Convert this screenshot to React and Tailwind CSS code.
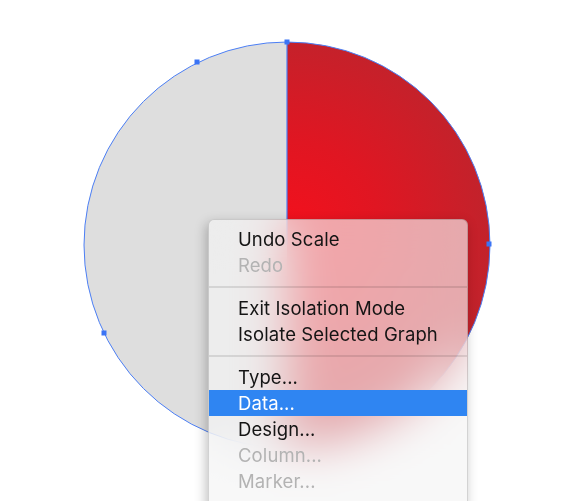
const items = [
  { label: 'Undo Scale' },
  { label: 'Redo', disabled: true },
  { sep: true },
  { label: 'Exit Isolation Mode' },
  { label: 'Isolate Selected Graph' },
  { sep: true },
  { label: 'Type...' },
  { label: 'Data...', active: true },
  { label: 'Design...' },
  { label: 'Column...', disabled: true },
  { label: 'Marker...', disabled: true },
];

const PieGraph = () => (
  <svg width="580" height="501" viewBox="0 0 580 501" className="block">
    <defs>
      <radialGradient id="redFill" cx="287" cy="235" r="210" gradientUnits="userSpaceOnUse">
        <stop offset="0%" stopColor="#f4101c" />
        <stop offset="45%" stopColor="#e01622" />
        <stop offset="100%" stopColor="#c0232c" />
      </radialGradient>
    </defs>
    {/* left half */}
    <path d="M287 42 A203 203 0 0 0 287 448 Z" fill="#dedede" />
    {/* right half */}
    <path d="M287 42 A203 203 0 0 1 287 448 Z" fill="url(#redFill)" />
    <circle cx="287" cy="245" r="203" fill="none" stroke="#4c7ff5" strokeWidth="1" />
    <line x1="287" y1="42" x2="287" y2="245" stroke="#4c7ff5" strokeWidth="1.2" />
    {[[287, 42], [197, 62], [104, 333], [489, 244]].map(([x, y], i) => (
      <rect key={i} x={x - 2.5} y={y - 2.5} width="5" height="5" fill="#3b74f5" />
    ))}
  </svg>
);

export default function App() {
  return (
    <div className="relative w-[580px] h-[501px] overflow-hidden bg-white">
      <PieGraph />

      {/* context menu */}
      <div
        className="absolute left-[208px] top-[219px] w-[260px] h-[300px] rounded-[6px] border border-black/15 bg-[#f5f5f5]/65 backdrop-blur-xl shadow-[-2px_4px_12px_rgba(0,0,0,0.25)] pt-[6px] text-[18.5px] leading-[26px] tracking-[0.1px] text-[#151515]"
        style={{ fontFamily: 'Inter, "Liberation Sans", sans-serif' }}
      >
        {items.map((it, i) =>
          it.sep ? (
            <div key={i} className="h-[17px] flex items-center">
              <div className="w-full h-[2px] bg-black/10" />
            </div>
          ) : (
            <div
              key={i}
              className={
                'h-[26px] pl-[29px] ' +
                (it.active ? 'bg-[#2f85f2] text-white' : it.disabled ? 'text-[#b3b3b3]' : '')
              }
            >
              {it.label}
            </div>
          )
        )}
      </div>
    </div>
  );
}
